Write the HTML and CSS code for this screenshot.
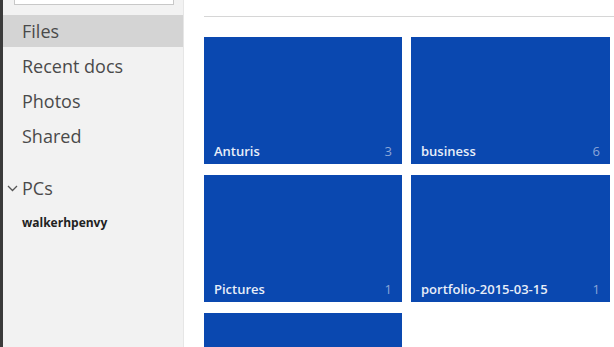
FILE: index.html
```html
<!DOCTYPE html>
<html lang="en">
<head>
    <meta charset="UTF-8">
    <title>Files</title>
    <link rel="stylesheet" href="styles.css">
</head>
<body>
    <!-- 왼쪽 메뉴 -->
    <aside class="side">
        <div class="search"></div>
        <ul class="nav">
            <li class="on">Files</li>
            <li>Recent docs</li>
            <li>Photos</li>
            <li>Shared</li>
        </ul>
        <div class="pcs">
            <svg class="chev" width="11" height="7" viewBox="0 0 11 7"><path d="M1 1 L5.5 5.5 L10 1" fill="none" stroke="#555" stroke-width="1.3"/></svg>
            PCs
        </div>
        <div class="pc">walkerhpenvy</div>
    </aside>

    <!-- 폴더 타일 -->
    <main class="main">
        <div class="bar"></div>
        <div class="tiles">
            <div class="tile"><span>Anturis</span><em>3</em></div>
            <div class="tile"><span>business</span><em>6</em></div>
            <div class="tile"><span>Pictures</span><em>1</em></div>
            <div class="tile"><span>portfolio-2015-03-15</span><em>1</em></div>
            <div class="tile"><span></span><em></em></div>
        </div>
    </main>
</body>
</html>
```

FILE: styles.css
```css
html,body{
    margin: 0;
    padding: 0;
}
body{
    display: flex;
    height: 347px;
    overflow: hidden;
    font-family: "Open Sans", "Noto Sans", sans-serif;
    background-color: #fff;
}

/* 사이드 메뉴 */
.side{
    width: 180px;
    flex-shrink: 0;
    border-left: 3px solid #3b3b3b;
    background-color: #f2f2f2;
    border-right: 1px solid #e6e6e6;
}
.search{
    height: 4px;
    margin: 0 9px 0 11px;
    background-color: #fff;
    border: 1px solid #c8c8c8;
    border-top: 0;
}
.nav{
    margin: 10px 0 0;
    padding: 0;
    list-style: none;
}
.nav li{
    height: 32px;
    line-height: 32px;
    margin-bottom: 3px;
    padding-left: 19px;
    font-size: 18px;
    color: #4a4a4a;
}
.nav li.on{
    background-color: #d4d4d4;
}
.pcs{
    display: flex;
    align-items: center;
    margin-top: 20px;
    padding-left: 4px;
    height: 32px;
    font-size: 18px;
    color: #4a4a4a;
}
.chev{
    margin-right: 4px;
}
.pc{
    margin-top: 10px;
    padding-left: 19px;
    font-size: 12px;
    font-weight: 700;
    color: #222;
}

/* 메인 영역 */
.main{
    flex: 1;
    padding-left: 20px;
    overflow: hidden;
}
.bar{
    height: 16px;
    border-bottom: 1px solid #d6d6d6;
}
.tiles{
    display: grid;
    grid-template-columns: 198px 199px;
    column-gap: 9px;
    row-gap: 11px;
    margin-top: 20px;
}
.tile{
    height: 127px;
    display: flex;
    align-items: flex-end;
    justify-content: space-between;
    padding: 0 10px 4px;
    box-sizing: border-box;
    background-color: #0a48b0;
    font-size: 13px;
    font-weight: 600;
}
.tile span{
    color: #e8eef8;
}
.tile em{
    font-style: normal;
    font-weight: 400;
    color: #8aa6d8;
}
```
